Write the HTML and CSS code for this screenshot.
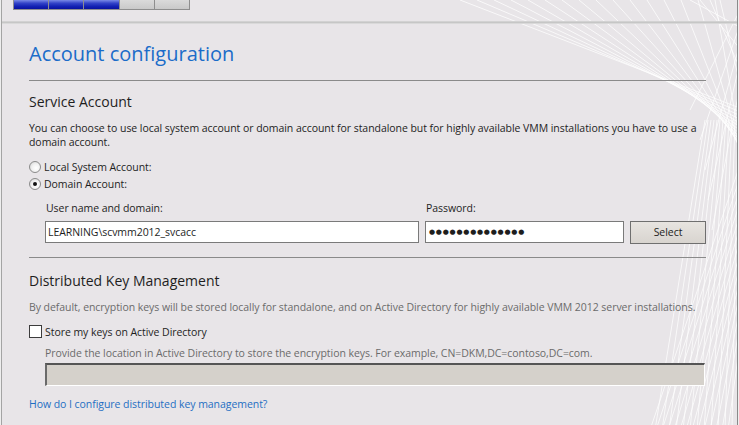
FILE: index.html
```html
<!DOCTYPE html>
<html lang="en">
<head>
<meta charset="utf-8">
<title>Account configuration</title>
<link rel="stylesheet" href="styles.css">
</head>
<body>
<div class="frame">
  <svg class="deco" viewBox="0 0 739 425" width="739" height="425" aria-hidden="true">
    <g class="fan">
      <line x1="460" y1="0" x2="745" y2="110"/>
      <line x1="477" y1="0" x2="745" y2="114"/>
      <line x1="494" y1="0" x2="745" y2="118"/>
      <line x1="511" y1="0" x2="745" y2="122"/>
      <line x1="528" y1="0" x2="745" y2="126"/>
      <line x1="545" y1="0" x2="745" y2="130"/>
      <line x1="562" y1="0" x2="745" y2="134"/>
      <line x1="579" y1="0" x2="745" y2="138"/>
      <line x1="596" y1="0" x2="745" y2="142"/>
      <line x1="613" y1="0" x2="745" y2="146"/>
      <line x1="630" y1="0" x2="745" y2="150"/>
      <line x1="647" y1="0" x2="745" y2="154"/>
      <line x1="664" y1="0" x2="745" y2="158"/>
      <line x1="681" y1="0" x2="745" y2="162"/>
      <line x1="698" y1="0" x2="745" y2="166"/>
      <line x1="715" y1="0" x2="745" y2="170"/>
      <line x1="690" y1="0" x2="745" y2="30"/>
      <line x1="700" y1="0" x2="745" y2="55"/>
      <line x1="710" y1="0" x2="745" y2="80"/>
      <line x1="720" y1="0" x2="745" y2="105"/>
      <line x1="745" y1="0" x2="690" y2="110"/>
      <line x1="745" y1="10" x2="700" y2="140"/>
      <line x1="745" y1="25" x2="705" y2="170"/>
      <line x1="745" y1="40" x2="708" y2="200"/>
      <line x1="745" y1="60" x2="712" y2="230"/>
      <line x1="745" y1="150" x2="650" y2="430"/>
      <line x1="745" y1="162" x2="656" y2="430"/>
      <line x1="745" y1="174" x2="662" y2="430"/>
      <line x1="745" y1="186" x2="668" y2="430"/>
      <line x1="745" y1="198" x2="674" y2="430"/>
      <line x1="745" y1="210" x2="680" y2="430"/>
      <line x1="745" y1="222" x2="686" y2="430"/>
      <line x1="745" y1="234" x2="692" y2="430"/>
      <line x1="745" y1="246" x2="698" y2="430"/>
      <line x1="745" y1="258" x2="704" y2="430"/>
      <line x1="745" y1="270" x2="710" y2="430"/>
      <line x1="745" y1="282" x2="716" y2="430"/>
      <line x1="745" y1="294" x2="722" y2="430"/>
      <line x1="745" y1="306" x2="728" y2="430"/>
      <line x1="655" y1="430" x2="705" y2="120"/>
      <line x1="662" y1="430" x2="708" y2="120"/>
      <line x1="669" y1="430" x2="711" y2="120"/>
      <line x1="676" y1="430" x2="714" y2="120"/>
      <line x1="683" y1="430" x2="717" y2="120"/>
      <line x1="690" y1="430" x2="720" y2="120"/>
      <line x1="697" y1="430" x2="723" y2="120"/>
      <line x1="704" y1="430" x2="726" y2="120"/>
      <line x1="711" y1="430" x2="729" y2="120"/>
      <line x1="718" y1="430" x2="732" y2="120"/>
      <line x1="725" y1="430" x2="735" y2="120"/>
      <line x1="732" y1="430" x2="738" y2="120"/>
    </g>
  </svg>

  <div class="progress">
    <span class="seg done"></span>
    <span class="seg done"></span>
    <span class="seg done"></span>
    <span class="seg"></span>
    <span class="seg"></span>
  </div>
  <div class="topline"></div>

  <main class="content">
    <h1 class="title">Account configuration</h1>
    <div class="rule"></div>

    <h2 class="section">Service Account</h2>
    <p class="text">You can choose to use local system account or domain account for standalone but for highly available VMM installations you have to use a<br>domain account.</p>

    <div class="radio-row first">
      <span class="radio"></span>
      <span class="label">Local System Account:</span>
    </div>
    <div class="radio-row">
      <span class="radio checked"></span>
      <span class="label">Domain Account:</span>
    </div>

    <div class="fields">
      <span class="field-label">User name and domain:</span>
      <span class="field-label">Password:</span>
      <span></span>
      <div class="input">LEARNING\scvmm2012_svcacc</div>
      <div class="input password">●●●●●●●●●●●●●●</div>
      <div class="button">Select</div>
    </div>

    <div class="rule second"></div>

    <h2 class="section dkm">Distributed Key Management</h2>
    <p class="text muted">By default, encryption keys will be stored locally for standalone, and on Active Directory for highly available VMM 2012 server installations.</p>

    <div class="check-row">
      <span class="checkbox"></span>
      <span class="label">Store my keys on Active Directory</span>
    </div>
    <p class="text muted indent">Provide the location in Active Directory to store the encryption keys. For example, CN=DKM,DC=contoso,DC=com.</p>
    <div class="input disabled"></div>

    <a class="link" href="#">How do I configure distributed key management?</a>
  </main>
</div>
</body>
</html>
```

FILE: styles.css
```css
html {
  background: #eeeeee;
}
body {
  margin: 0;
  width: 739px;
  height: 425px;
  overflow: hidden;
  font-family: "Open Sans", "Noto Sans", sans-serif;
  font-size: 10.5px;
  letter-spacing: -0.05px;
  color: #1e1e1e;
}
.frame {
  position: relative;
  margin-left: 1px;
  width: 735px;
  height: 425px;
  border-left: 1px solid #a4a4a4;
  border-right: 1px solid #8a8a8a;
  background: #e8e5e8;
  overflow: hidden;
}
.deco {
  position: absolute;
  left: -2px;
  top: 0;
  z-index: 0;
  pointer-events: none;
}
.deco .fan line {
  stroke: #ffffff;
  stroke-width: 1;
  opacity: 0.75;
}
.progress {
  position: relative;
  z-index: 1;
  display: flex;
  gap: 1px;
  margin-left: 11px;
  width: 175px;
  height: 9px;
  border: 1px solid #8e8e8e;
  border-top: 0;
  background: #8e8e8e;
}
.seg {
  flex: 1;
  background: linear-gradient(#dadada, #c9c9c9);
}
.seg.done {
  background: linear-gradient(#7a8ae6 0%, #3444c8 35%, #1322b4 70%, #0a12a0 100%);
}
.topline {
  position: relative;
  z-index: 1;
  margin-top: 11px;
  height: 1px;
  border-top: 1px solid #d2d2d2;
  border-bottom: 1px solid #d9d9d9;
  background: #c6c6c6;
}
.content {
  position: relative;
  z-index: 1;
  padding: 0 31px 0 27px;
}
.title {
  margin: 18px 0 0;
  font-size: 20px;
  line-height: 24px;
  font-weight: 400;
  letter-spacing: 0;
  color: #1b6cc9;
}
.rule {
  margin-top: 14px;
  height: 1px;
  background: #8a8a8a;
}
.section {
  margin: 11px 0 0;
  font-size: 14px;
  line-height: 20px;
  font-weight: 400;
  letter-spacing: 0;
  color: #1e1e1e;
}
.text {
  margin: 9px 0 0;
  line-height: 14px;
}
.muted {
  color: #6b6b6b;
}
.indent {
  margin-left: 16px;
  margin-top: 6px;
}
.radio-row,
.check-row {
  display: flex;
  align-items: center;
  height: 17px;
}
.radio-row.first {
  margin-top: 9px;
}
.radio {
  box-sizing: border-box;
  width: 12px;
  height: 12px;
  margin-right: 3px;
  border-radius: 50%;
  border: 1px solid #8b8b8b;
  background: radial-gradient(circle at 60% 60%, #ffffff 0%, #f2f2f2 45%, #cfcfcf 100%);
  position: relative;
}
.radio.checked::after {
  content: "";
  position: absolute;
  left: 3px;
  top: 3px;
  width: 4px;
  height: 4px;
  border-radius: 50%;
  background: #111;
}
.fields {
  display: grid;
  grid-template-columns: 374px 199px 76px;
  column-gap: 6px;
  margin: 9px 0 0 16px;
}
.field-label {
  line-height: 14px;
  margin-bottom: 6px;
  padding-left: 1px;
}
.input {
  box-sizing: border-box;
  height: 22px;
  border: 1px solid #7a7a7a;
  background: #ffffff;
  padding: 0 2px;
  line-height: 20px;
  white-space: nowrap;
  overflow: hidden;
}
.password {
  font-family: "DejaVu Sans", sans-serif;
  font-size: 7px;
  letter-spacing: 0.75px;
  padding-left: 3px;
}
.button {
  box-sizing: border-box;
  height: 23px;
  border: 1px solid #6f6f6f;
  background: linear-gradient(#e7e4e0, #d8d4cf);
  text-align: center;
  line-height: 21px;
}
.rule.second {
  margin-top: 13px;
}
.section.dkm {
  margin-top: 13px;
}
.check-row {
  margin-top: 9px;
}
.checkbox {
  box-sizing: border-box;
  width: 13px;
  height: 13px;
  margin-right: 3px;
  border: 1px solid #3c3c3c;
  background: #ffffff;
}
.input.disabled {
  margin: 3px 1px 0 16px;
  height: 23px;
  border-top: 2px solid #555555;
  border-left: 2px solid #6a6a6a;
  border-right: 1px solid #ffffff;
  border-bottom: 1px solid #ffffff;
  background: #d5d1cb;
}
.link {
  display: inline-block;
  margin-top: 11px;
  line-height: 14px;
  color: #1f6fc3;
  text-decoration: none;
}
```
